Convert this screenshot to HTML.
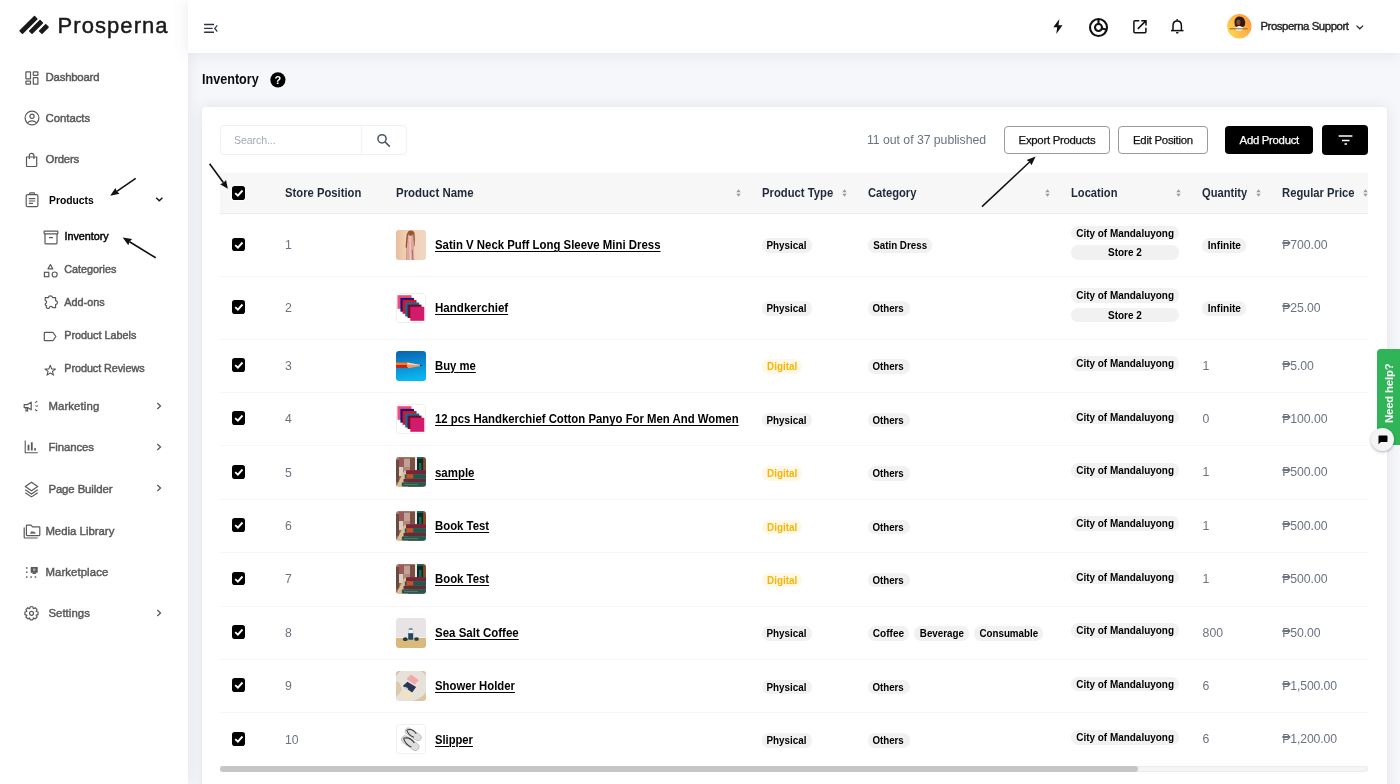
<!DOCTYPE html>
<html lang="en">
<head>
<meta charset="utf-8">
<title>Inventory - Prosperna</title>
<style>
*{box-sizing:border-box;margin:0;padding:0}
html,body{width:1400px;height:784px;overflow:hidden}
body{font-family:"Liberation Sans",sans-serif;background:#f6f7fa;color:#111;position:relative}
#bgband{display:none}
.abs{position:absolute}
.t{position:absolute;height:20px;line-height:20px;white-space:nowrap}
#root{position:absolute;left:0;top:0;width:1400px;height:784px;overflow:hidden;will-change:transform}
#sidebar{position:absolute;left:0;top:0;width:188px;height:784px;background:#fff;box-shadow:0 0 14px rgba(70,80,110,0.110)}
#topbar{position:absolute;left:188px;top:0;width:1212px;height:52.700px;background:#fff;box-shadow:0 0 16px rgba(70,80,110,0.120)}
.nav,.sub{position:absolute;height:20px;line-height:20px;font-weight:bold;color:#5b5b5b;white-space:nowrap}
.nav{font-size:12px}
.sub{font-size:11.5px}
.ic{position:absolute}
#card{position:absolute;left:202px;top:107px;width:1185px;height:700px;background:#fff;border-radius:4px;box-shadow:0 0 14px rgba(70,80,110,0.125)}
#thead{position:absolute;left:220px;top:172.500px;width:1148px;height:41.700px;background:#f7f7f8;border-bottom:1px solid #ececee}
.th{position:absolute;top:183px;height:20px;line-height:20px;font-size:12.4px;font-weight:bold;color:#1f2937;white-space:nowrap}
.sort{position:absolute;top:188px;width:6px;height:10px}
.rl{position:absolute;left:220px;width:1148px;height:1px;background:#f6f6f8}
.cb{position:absolute;left:231.600px;width:13.700px;height:13.900px;background:#000;border-radius:2.800px;box-shadow:0 0 0 0.800px #fff}
.cb svg{position:absolute;left:0;top:0}
.pos{position:absolute;left:285px;font-size:12.5px;color:#6b7280;line-height:16px}
.pn{position:absolute;left:435px;font-size:12.4px;font-weight:bold;color:#000;text-decoration:underline;line-height:16px;white-space:nowrap}
.img{position:absolute;left:396px;width:30px;height:30px;border-radius:3px;overflow:hidden}
.img svg{display:block}
.tag{position:absolute;height:14px;line-height:14px;font-size:10.4px;font-weight:bold;color:#000;background:#f1f1f1;border-radius:7px;white-space:nowrap;text-align:center}
.tag span{display:inline-block;transform-origin:50% 50%}
.dig{color:#f8b400;background:#fff8e6}
.qty{position:absolute;left:1202px;font-size:12.5px;color:#6b7280;line-height:16px}
.price{position:absolute;left:1282px;font-size:12.5px;color:#6b7280;line-height:16px;white-space:nowrap}
.btn{position:absolute;top:125px;height:29px;border-radius:4px;font-size:11.3px;text-align:center;white-space:nowrap}
.btn.o{border:1px solid #9a9a9a;background:#fff;color:#111;line-height:27px}
.btn.b{background:#000;color:#fff;line-height:29px}
</style>
</head>
<body>
<div id="root">
<div id="bgband"></div>
<div id="sidebar">
<svg class="ic" style="left:0;top:0;overflow:visible" width="60" height="50" fill="none" stroke="#1a1a1a" stroke-width="4.300" stroke-linecap="butt" stroke-linejoin="round"><path d="M22.49 33.20 L36.84 18.94 L34.51 16.60 L20.16 30.86 Z" fill="#1a1a1a" stroke-width="1.500"/><path d="M32.04 33.25 L42.39 22.99 L40.06 20.65 L29.71 30.91 Z" fill="#1a1a1a" stroke-width="1.500"/><path d="M41.99 33.24 L48.05 27.14 L45.71 24.81 L39.65 30.91 Z" fill="#1a1a1a" stroke-width="1.500"/></svg>
<div class="t logo" style="left:57.6px;top:16.3px;font-size:22px;letter-spacing:1.055px;color:#1a1a1a;-webkit-text-stroke:0.450px #1a1a1a;">Prosperna</div>
<div class="t " style="left:45.6px;top:67.1px;font-size:11.4px;letter-spacing:-0.230px;color:#595959;-webkit-text-stroke:0.45px #595959;">Dashboard</div>
<div class="t " style="left:45.6px;top:107.6px;font-size:11.4px;letter-spacing:-0.061px;color:#595959;-webkit-text-stroke:0.45px #595959;">Contacts</div>
<div class="t " style="left:45.6px;top:148.8px;font-size:11.4px;letter-spacing:-0.240px;color:#595959;-webkit-text-stroke:0.45px #595959;">Orders</div>
<div class="t " style="left:48.5px;top:190.3px;font-size:11.4px;transform:scaleX(0.9067);transform-origin:0 50%;color:#000;font-weight:bold;">Products</div>
<div class="t " style="left:48.4px;top:396.1px;font-size:11.4px;letter-spacing:0.105px;color:#595959;-webkit-text-stroke:0.45px #595959;">Marketing</div>
<div class="t " style="left:48.4px;top:436.6px;font-size:11.4px;letter-spacing:-0.095px;color:#595959;-webkit-text-stroke:0.45px #595959;">Finances</div>
<div class="t " style="left:48.4px;top:478.6px;font-size:11.4px;letter-spacing:-0.106px;color:#595959;-webkit-text-stroke:0.45px #595959;">Page Builder</div>
<div class="t " style="left:45.4px;top:520.6px;font-size:11.4px;letter-spacing:-0.005px;color:#595959;-webkit-text-stroke:0.45px #595959;">Media Library</div>
<div class="t " style="left:45.4px;top:561.6px;font-size:11.4px;letter-spacing:0.082px;color:#595959;-webkit-text-stroke:0.45px #595959;">Marketplace</div>
<div class="t " style="left:48.4px;top:602.6px;font-size:11.4px;letter-spacing:0.039px;color:#595959;-webkit-text-stroke:0.45px #595959;">Settings</div>
<div class="t " style="left:64.5px;top:225.7px;font-size:10.8px;letter-spacing:-0.025px;color:#000;-webkit-text-stroke:0.45px #000;">Inventory</div>
<div class="t " style="left:64.3px;top:258.7px;font-size:10.8px;letter-spacing:-0.023px;color:#595959;-webkit-text-stroke:0.45px #595959;">Categories</div>
<div class="t " style="left:64.3px;top:291.7px;font-size:10.8px;letter-spacing:0.039px;color:#595959;-webkit-text-stroke:0.45px #595959;">Add-ons</div>
<div class="t " style="left:64.3px;top:324.7px;font-size:10.8px;letter-spacing:-0.003px;color:#595959;-webkit-text-stroke:0.45px #595959;">Product Labels</div>
<div class="t " style="left:64.3px;top:357.7px;font-size:10.8px;letter-spacing:-0.055px;color:#595959;-webkit-text-stroke:0.45px #595959;">Product Reviews</div>
<svg class="ic" style="left:24.5px;top:70.5px;" width="14" height="14" viewBox="0 0 14 14" fill="none" stroke="#595959" stroke-width="1.2"><rect x="0.9" y="0.9" width="4.6" height="6.9" rx="0.4"/><rect x="8.3" y="0.9" width="4.6" height="3.4" rx="0.4"/><rect x="0.9" y="10.2" width="4.6" height="2.9" rx="0.4"/><rect x="8.300" y="6.700" width="4.600" height="6.400" rx="0.4"/></svg>
<svg class="ic" style="left:23.6px;top:110.4px;" width="16" height="16" viewBox="0 0 16 16" fill="none" stroke="#595959" stroke-width="1.2"><circle cx="8" cy="8" r="6.9"/><circle cx="8" cy="6.300" r="2.1"/><path d="M3.2 12.9 Q8 8.700 12.8 12.9"/></svg>
<svg class="ic" style="left:24.8px;top:151.5px;" width="14" height="16" viewBox="0 0 14 16" fill="none" stroke="#595959" stroke-width="1.2"><path d="M1.500 5 H11.700 V13.6 Q11.700 14.500 10.8 14.500 H2.400 Q1.500 14.500 1.500 13.6Z"/><path d="M4.300 7 V3.500 Q4.300 1.300 6.600 1.300 Q8.900 1.300 8.900 3.500 V7"/></svg>
<svg class="ic" style="left:24.6px;top:192px;" width="14" height="16" viewBox="0 0 14 16" fill="none" stroke="#595959" stroke-width="1.2"><rect x="1.200" y="2.600" width="11.700" height="12.100" rx="1.500"/><path d="M4.600 2.600 V1.500 Q4.600 0.900 5.200 0.900 H8.900 Q9.500 0.900 9.500 1.500 V2.600" /><path d="M3.800 6.600 H10.300 M3.800 9 H10.300 M3.800 11.400 H8"/></svg>
<svg class="ic" style="left:42.5px;top:229.5px;" width="16" height="15" viewBox="0 0 16 15" fill="none" stroke="#595959" stroke-width="1.2"><rect x="1.100" y="1.200" width="13.800" height="2.600" rx="0.500"/><path d="M2 3.800 V12.900 Q2 13.900 3 13.900 H13 Q14 13.900 14 12.900 V3.800"/><path d="M6 7.600 H10" stroke-width="1.3"/></svg>
<svg class="ic" style="left:43px;top:262.6px;" width="16" height="15" viewBox="0 0 16 15" fill="none" stroke="#595959" stroke-width="1.2"><path d="M7.400 1.600 L9.800 5.800 H5Z" stroke-linejoin="round"/><rect x="1.400" y="9.300" width="4.400" height="4.400"/><circle cx="11.700" cy="11.500" r="2.500"/></svg>
<svg class="ic" style="left:43px;top:295.2px;" width="16" height="15" viewBox="0 0 16 15" fill="none" stroke="#595959" stroke-width="1.2"><path d="M2.200 2.600 H5.300 Q5.600 0.900 7.400 0.900 Q9.200 0.900 9.500 2.600 H12.600 V5.600 Q14.500 5.900 14.500 7.600 Q14.500 9.300 12.600 9.600 V12.700 H9.700 Q9.300 11.200 7.900 11.300 Q6.600 11.400 6.300 13 Q5.200 14 3.800 13 Q2.800 12.300 3.600 10.800 Q2.200 10.600 2.200 9.500 Q2.300 8.600 3.200 8 Q4 7.400 3.400 6.300 Q2.900 5.600 2.200 5.500Z" stroke-linejoin="round"/></svg>
<svg class="ic" style="left:43.2px;top:330.5px;" width="14" height="11" viewBox="0 0 14 11" fill="none" stroke="#595959" stroke-width="1.2"><path d="M1.300 2.200 Q1.300 1.300 2.200 1.300 H9.300 Q9.900 1.300 10.300 1.800 L12.900 5.500 L10.300 9.200 Q9.900 9.700 9.300 9.700 H2.200 Q1.300 9.700 1.300 8.800Z" stroke-linejoin="round"/></svg>
<svg class="ic" style="left:44.4px;top:363.7px;" width="12.5" height="12.5" viewBox="0 0 12.5 12.5" fill="none" stroke="#595959" stroke-width="1.2"><path d="M6.250 1.300 L7.600 4.900 L11.500 5 L8.450 7.400 L9.500 11.100 L6.250 9 L3 11.100 L4.050 7.400 L1 5 L4.900 4.900Z" stroke-linejoin="round" stroke-width="1.100"/></svg>
<svg class="ic" style="left:23.3px;top:400px;" width="16" height="13" viewBox="0 0 16 13" fill="none" stroke="#595959" stroke-width="1.2"><path d="M1.200 4.600 H4.600 L8.200 2.200 V9.800 L4.600 7.600 H1.200Z" stroke-linejoin="round"/><path d="M3 7.800 V10.800 H4.600 V7.800"/><path d="M10.400 6 H10.500" stroke-width="1.400"/><path d="M12 2.600 L14.300 1.200 M12.500 6 H15 M12 9.500 L14.300 11" stroke-width="1.100"/></svg>
<svg class="ic" style="left:24.2px;top:440px;" width="14.5" height="14" viewBox="0 0 14.5 14" fill="none" stroke="#595959" stroke-width="1.2"><path d="M1.200 0.600 V12.800 H13.800" stroke-width="1.100"/><path d="M4.500 10.600 V4.800 M7.800 10.600 V2.200 M11.100 10.600 V8.200" stroke-width="1.800"/></svg>
<svg class="ic" style="left:23.9px;top:480.8px;" width="15" height="17" viewBox="0 0 15 17" fill="none" stroke="#595959" stroke-width="1.2"><path d="M7.500 1.200 L13.700 5.500 L7.500 9.800 L1.300 5.500Z" stroke-linejoin="round"/><path d="M1.300 8.800 L7.500 13 L13.700 8.800"/><path d="M1.300 11.700 L7.500 15.900 L13.700 11.700"/></svg>
<svg class="ic" style="left:22.6px;top:523.6px;" width="18" height="15.5" viewBox="0 0 18 15.5" fill="none" stroke="#595959" stroke-width="1.2"><path d="M3.400 2 Q3.400 1.200 4.200 1.200 H8 L9.500 2.800 H16 Q16.800 2.800 16.800 3.600 V10.800 Q16.800 11.600 16 11.600 H4.200 Q3.400 11.600 3.400 10.800Z" stroke-linejoin="round"/><path d="M1.200 3.500 V13.200 Q1.200 14 2 14 H14.600"/><path d="M7.300 9.300 L9 7.300 L10.100 8.500 L11 7.700 L12.400 9.300Z" fill="#595959" stroke-width="0.600"/></svg>
<svg class="ic" style="left:25px;top:566px;" width="14" height="13" viewBox="0 0 14 13" fill="none" stroke="#595959" stroke-width="1.2"><rect x="5.700" y="1" width="7" height="5.800" fill="#595959" stroke="none"/><rect x="8" y="2.500" width="2.400" height="2.400" fill="#aaa" stroke="none"/><path d="M7.500 6.800 H11 V8 H7.500Z" fill="#595959" stroke="none"/><g fill="#595959" stroke="none"><rect x="1" y="1.200" width="1.500" height="1.500"/><rect x="1" y="5.400" width="1.500" height="1.500"/><rect x="1" y="10.300" width="1.500" height="1.500"/><rect x="5.300" y="10.300" width="1.500" height="1.500"/><rect x="9.700" y="10.300" width="1.500" height="1.500"/></g></svg>
<svg class="ic" style="left:24px;top:605.8px;" width="15" height="15" viewBox="0 0 15 15" fill="none" stroke="#595959" stroke-width="1.2"><path d="M14.07 5.97 L14.07 8.63 L12.27 9.10 L12.15 9.40 L13.08 11.00 L11.20 12.88 L9.60 11.95 L9.30 12.07 L8.83 13.87 L6.17 13.87 L5.70 12.07 L5.40 11.95 L3.80 12.88 L1.92 11.00 L2.85 9.40 L2.73 9.10 L0.93 8.63 L0.93 5.97 L2.73 5.50 L2.85 5.20 L1.92 3.60 L3.80 1.72 L5.40 2.65 L5.70 2.53 L6.17 0.73 L8.83 0.73 L9.30 2.53 L9.60 2.65 L11.20 1.72 L13.08 3.60 L12.15 5.20 L12.27 5.50 Z" stroke-linejoin="round"/><circle cx="7.500" cy="7.300" r="2"/></svg>
<svg class="ic" style="left:155px;top:196.1px;" width="9" height="7" viewBox="0 0 9 7" fill="none" stroke="#595959" stroke-width="1.2"><path d="M1.200 1.700 L4.300 4.700 L7.400 1.700" stroke="#111" stroke-width="1.400"/></svg>
<svg class="ic" style="left:156px;top:402.4px;" width="6" height="8" viewBox="0 0 6 8" fill="none" stroke="#595959" stroke-width="1.2"><path d="M1.300 1 L4.500 4 L1.300 7" stroke-width="1.300"/></svg>
<svg class="ic" style="left:156px;top:442.9px;" width="6" height="8" viewBox="0 0 6 8" fill="none" stroke="#595959" stroke-width="1.2"><path d="M1.300 1 L4.500 4 L1.300 7" stroke-width="1.300"/></svg>
<svg class="ic" style="left:156px;top:483.9px;" width="6" height="8" viewBox="0 0 6 8" fill="none" stroke="#595959" stroke-width="1.2"><path d="M1.300 1 L4.500 4 L1.300 7" stroke-width="1.300"/></svg>
<svg class="ic" style="left:156px;top:609px;" width="6" height="8" viewBox="0 0 6 8" fill="none" stroke="#595959" stroke-width="1.2"><path d="M1.300 1 L4.500 4 L1.300 7" stroke-width="1.300"/></svg>
<svg class="ic" style="left:0;top:0;overflow:visible" width="1" height="1"><path d="M135.7 178.3 L116.8 191.3" stroke="#111" stroke-width="1.6" fill="none"/><path d="M110.2 195.8 L115.4 187.9 L116.8 191.3 L119.5 193.8 Z" fill="#111"/></svg>
<svg class="ic" style="left:0;top:0;overflow:visible" width="1" height="1"><path d="M155.7 257.8 L129.5 241.8" stroke="#111" stroke-width="1.6" fill="none"/><path d="M122.7 237.6 L132.1 239.1 L129.5 241.8 L128.3 245.3 Z" fill="#111"/></svg>
</div>
<div id="topbar"></div>
<svg class="ic" style="left:203px;top:22px" width="16" height="13" viewBox="0 0 16 13" fill="none" stroke="#2b3445" stroke-width="1.4"><path d="M1.1 2.500 H11 M1.100 6.400 H9.600 M1.100 10.300 H11"/><path d="M14.300 3.300 L11.700 6.400 L14.300 9.500" stroke-width="1.200"/></svg>
<svg class="ic" style="left:1052px;top:18px" width="12" height="17" viewBox="0 0 12 17" fill="#111"><path d="M7.400 0.900 L1.300 9.300 H5.200 L4.300 16 L10.500 7.300 H6.500Z"/></svg>
<svg class="ic" style="left:1088px;top:16.700px" width="21" height="21" viewBox="0 0 21 21" fill="none" stroke="#111" stroke-width="2.100"><circle cx="10.500" cy="10.500" r="8.500"/><circle cx="10.500" cy="10.500" r="3.500"/><path d="M10.500 7 V1.900 M13.800 11.600 L18.900 12.800"/></svg>
<svg class="ic" style="left:1132px;top:18.500px" width="16" height="16" viewBox="0 0 16 16" fill="none" stroke="#111" stroke-width="1.500"><path d="M7.300 1.800 H2.900 Q1.900 1.800 1.900 2.800 V12.800 Q1.900 13.800 2.900 13.800 H12.900 Q13.900 13.800 13.900 12.800 V8.700"/><path d="M5.800 9.900 L13.600 2.100 M9.300 1.700 H14 V6.400" /></svg>
<svg class="ic" style="left:1170px;top:18px" width="14.500" height="17" viewBox="0 0 14.500 17" fill="none" stroke="#111" stroke-width="1.500"><path d="M3 12.400 V7.600 Q3 3 7.200 3 Q11.400 3 11.400 7.600 V12.400"/><path d="M1 12.600 H13.500"/><circle cx="7.200" cy="1.900" r="0.900" fill="#111" stroke="none"/><path d="M6 14.600 Q7.200 16 8.400 14.600Z" fill="#111" stroke-width="0.800"/></svg>
<svg class="ic" style="left:1227px;top:14px" width="25" height="25" viewBox="0 0 25 25">
<defs><linearGradient id="av" x1="0" y1="0.800" x2="1" y2="0.200"><stop offset="0" stop-color="#ffd652"/><stop offset="0.500" stop-color="#ffb848"/><stop offset="1" stop-color="#ff9440"/></linearGradient><clipPath id="avc"><circle cx="12.300" cy="12.300" r="12.200"/></clipPath></defs>
<circle cx="12.300" cy="12.300" r="12.200" fill="url(#av)"/>
<g clip-path="url(#avc)"><path d="M7.600 9.500 Q6.800 5 10.500 2.800 Q14.500 1.600 17 4.500 Q19 7.500 17.800 11.500 Q16.500 13.500 14 13 H9.500 Q7.300 12.200 7.600 9.500Z" fill="#2e1a12"/><ellipse cx="11.400" cy="8.200" rx="2.100" ry="2.800" fill="#8a4a2a"/><path d="M8 14.800 Q10 11.600 13 11.900 Q16 12.200 16.800 14.800 L14 16.800 H9.500Z" fill="#f6efe2"/><rect x="2.600" y="14.300" width="18" height="1" fill="#6a4a20" opacity="0.750"/></g></svg>
<div class="t " style="left:1260.4px;top:16.3px;font-size:11.4px;letter-spacing:-0.441px;color:#1f1f1f;-webkit-text-stroke:0.4px #1f1f1f;">Prosperna Support</div>
<svg class="ic" style="left:1354.500px;top:23.500px" width="10" height="7" viewBox="0 0 10 7" fill="none" stroke="#222" stroke-width="1.200"><path d="M1.500 1.600 L4.800 4.800 L8.100 1.600"/></svg>
<div class="t " style="left:202.3px;top:69.4px;font-size:14px;transform:scaleX(0.8998);transform-origin:0 50%;color:#0b0b0b;font-weight:bold;">Inventory</div>
<svg class="ic" style="left:269.500px;top:71.800px" width="16" height="16" viewBox="0 0 16 16"><circle cx="7.900" cy="7.800" r="7.600" fill="#000"/><text x="7.900" y="11.700" text-anchor="middle" font-family="Liberation Sans, sans-serif" font-weight="bold" font-size="11" fill="#fff">?</text></svg>
<div id="card"></div>
<div class="abs" style="left:220px;top:125px;width:187px;height:29.500px;border:1px solid #eef0f3;border-radius:4px;background:#fff"></div><div class="abs" style="left:361px;top:125px;width:1px;height:29.500px;background:#eef0f3"></div>
<div class="t " style="left:234px;top:129.8px;font-size:10.6px;letter-spacing:-0.102px;color:#a3aab5;">Search...</div>
<svg class="ic" style="left:375.500px;top:132.500px" width="16" height="16" viewBox="0 0 16 16" fill="none" stroke="#4b5563" stroke-width="1.500"><circle cx="6" cy="5.800" r="4.100"/><path d="M9 8.900 L13.800 13.600"/></svg>
<div class="t " style="left:867px;top:130px;font-size:12.25px;letter-spacing:-0.029px;color:#6b7280;">11 out of 37 published</div>
<div class="btn o" style="left:1004px;width:106px;top:125.500px;height:28.700px"></div><div class="btn o" style="left:1118.400px;width:89.200px;top:125.500px;height:28.700px"></div>
<div class="btn b" style="left:1225.300px;width:88.200px;top:125.800px;height:28px"></div><div class="btn b" style="left:1322px;width:46.300px;top:124.900px;height:29.800px"></div>
<div class="t " style="left:1018.6px;top:129.9px;font-size:11.4px;letter-spacing:-0.287px;color:#111;-webkit-text-stroke:0.250px #111;">Export Products</div>
<div class="t " style="left:1133px;top:129.9px;font-size:11.4px;letter-spacing:-0.259px;color:#111;-webkit-text-stroke:0.250px #111;">Edit Position</div>
<div class="t " style="left:1239.6px;top:129.9px;font-size:11.4px;letter-spacing:-0.304px;color:#fff;-webkit-text-stroke:0.250px #fff;">Add Product</div>
<svg class="ic" style="left:1337px;top:133px" width="17" height="14" viewBox="0 0 17 14" fill="none" stroke="#fff" stroke-width="1.500"><path d="M1.600 3 H15.400 M5 7.400 H12.500 M7.500 11 H10"/></svg>
<div id="thead"></div>
<div class="cb" style="top:186.3px"><svg width="14" height="14" viewBox="0 0 14 14" fill="none" stroke="#fff" stroke-width="1.900"><path d="M3.200 7.100 L5.900 9.600 L10.500 4.500"/></svg></div>
<div class="t " style="left:285px;top:183px;font-size:12.25px;transform:scaleX(0.9189);transform-origin:0 50%;color:#1f2937;font-weight:bold;">Store Position</div>
<div class="t " style="left:395.6px;top:183px;font-size:12.25px;transform:scaleX(0.9344);transform-origin:0 50%;color:#1f2937;font-weight:bold;">Product Name</div>
<div class="t " style="left:761.6px;top:183px;font-size:12.25px;transform:scaleX(0.9203);transform-origin:0 50%;color:#1f2937;font-weight:bold;">Product Type</div>
<div class="t " style="left:867.6px;top:183px;font-size:12.25px;transform:scaleX(0.9115);transform-origin:0 50%;color:#1f2937;font-weight:bold;">Category</div>
<div class="t " style="left:1071px;top:183px;font-size:12.25px;transform:scaleX(0.9111);transform-origin:0 50%;color:#1f2937;font-weight:bold;">Location</div>
<div class="t " style="left:1202.4px;top:183px;font-size:12.25px;transform:scaleX(0.9098);transform-origin:0 50%;color:#1f2937;font-weight:bold;">Quantity</div>
<div class="t " style="left:1282.4px;top:183px;font-size:12.25px;transform:scaleX(0.9192);transform-origin:0 50%;color:#1f2937;font-weight:bold;">Regular Price</div>
<svg class="ic" style="left:735.7px;top:189.300px" width="5" height="8" viewBox="0 0 5 8" fill="#9b9b9b"><path d="M2.500 0.300 L4.700 3.200 H0.300Z M2.500 7.700 L4.700 4.800 H0.300Z"/></svg>
<svg class="ic" style="left:842px;top:189.300px" width="5" height="8" viewBox="0 0 5 8" fill="#9b9b9b"><path d="M2.500 0.300 L4.700 3.200 H0.300Z M2.500 7.700 L4.700 4.800 H0.300Z"/></svg>
<svg class="ic" style="left:1045px;top:189.300px" width="5" height="8" viewBox="0 0 5 8" fill="#9b9b9b"><path d="M2.500 0.300 L4.700 3.200 H0.300Z M2.500 7.700 L4.700 4.800 H0.300Z"/></svg>
<svg class="ic" style="left:1176.3px;top:189.300px" width="5" height="8" viewBox="0 0 5 8" fill="#9b9b9b"><path d="M2.500 0.300 L4.700 3.200 H0.300Z M2.500 7.700 L4.700 4.800 H0.300Z"/></svg>
<svg class="ic" style="left:1256px;top:189.300px" width="5" height="8" viewBox="0 0 5 8" fill="#9b9b9b"><path d="M2.500 0.300 L4.700 3.200 H0.300Z M2.500 7.700 L4.700 4.800 H0.300Z"/></svg>
<svg class="ic" style="left:1363px;top:189.300px" width="5" height="8" viewBox="0 0 5 8" fill="#9b9b9b"><path d="M2.500 0.300 L4.700 3.200 H0.300Z M2.500 7.700 L4.700 4.800 H0.300Z"/></svg>
<div class="rl" style="top:276.2px"></div>
<div class="cb" style="top:237.6px"><svg width="14" height="14" viewBox="0 0 14 14" fill="none" stroke="#fff" stroke-width="1.900"><path d="M3.200 7.100 L5.900 9.600 L10.500 4.500"/></svg></div>
<div class="t " style="left:285px;top:234.9px;font-size:12.25px;color:#6b7280;">1</div>
<div class="img" style="top:230.25px"><svg width="30" height="30" viewBox="0 0 30 30"><filter id="bl0_3" x="-5%" y="-5%" width="110%" height="110%"><feGaussianBlur stdDeviation="0.3"/></filter><g filter="url(#bl0_3)"><defs><linearGradient id="dr" x1="0" x2="1" y1="0" y2="0"><stop offset="0" stop-color="#e6b691"/><stop offset="0.300" stop-color="#efcdb0"/><stop offset="1" stop-color="#f0d8c4"/></linearGradient></defs><rect x="-3" y="-3" width="36" height="36" fill="url(#dr)"/><path d="M12.400 1.200 Q13.500 0.400 15 0.600 Q17.500 0.600 18.400 2.500 L18.900 9 L18.500 16 L17.800 16.500 L18 30 H10.500 L10.700 18 L9.600 17.200 L10.200 9 L10.800 4Z" fill="#9a5530"/><path d="M12.200 3.800 L13 5.500 L16.500 5.500 L17.200 3.600 L17.800 13 L18.300 30 H10.500 L11 16Z" fill="#dea8a0"/><path d="M13.300 6 L13.800 30 H15 L14.600 6Z" fill="#efcdc6"/><path d="M15.800 20 L16.300 30 H17.300 L16.800 19Z" fill="#b07068"/></g></svg></div>
<div class="t " style="left:434.9px;top:234.9px;font-size:12.25px;transform:scaleX(0.9305);transform-origin:0 50%;color:#000;font-weight:bold;text-decoration:underline;text-decoration-thickness:1px;text-underline-offset:1.500px;">Satin V Neck Puff Long Sleeve Mini Dress</div>
<div class="tag " style="left:761.7px;top:238.4px;width:50.4px;height:14.6px;line-height:14.6px;font-size:10.6px"><span style="transform:scaleX(0.9299)">Physical</span></div>
<div class="tag " style="left:867.5px;top:238.4px;width:64.6px;height:14.6px;line-height:14.6px;font-size:10.6px"><span style="transform:scaleX(0.9258)">Satin Dress</span></div>
<div class="tag " style="left:1071px;top:225.7px;width:108.3px;height:14.6px;line-height:14.6px;font-size:10.6px"><span style="transform:scaleX(0.9383)">City of Mandaluyong</span></div>
<div class="tag " style="left:1071px;top:245.1px;width:108.3px;height:14.6px;line-height:14.6px;font-size:10.6px"><span style="transform:scaleX(0.9406)">Store 2</span></div>
<div class="tag " style="left:1202.2px;top:238.4px;width:43.4px;height:14.6px;line-height:14.6px;font-size:10.6px"><span style="transform:scaleX(0.9557)">Infinite</span></div>
<div class="t " style="left:1282.2px;top:234.7px;font-size:12.25px;letter-spacing:-0.063px;color:#6b7280;">₱700.00</div>
<div class="rl" style="top:338.5px"></div>
<div class="cb" style="top:300.15px"><svg width="14" height="14" viewBox="0 0 14 14" fill="none" stroke="#fff" stroke-width="1.900"><path d="M3.200 7.100 L5.900 9.600 L10.500 4.500"/></svg></div>
<div class="t " style="left:285px;top:297.95px;font-size:12.25px;color:#6b7280;">2</div>
<div class="img" style="top:292.8px"><svg width="30" height="30" viewBox="0 0 30 30"><rect x="0.500" y="0.500" width="29" height="29" rx="2.500" fill="#fff" stroke="#edf0f3"/><rect x="1.500" y="2.200" width="14" height="13.600" fill="#f0497a"/><rect x="4.400" y="4.900" width="13.600" height="13.800" fill="#15197c"/><rect x="6.600" y="7" width="13.900" height="13.800" fill="#df131d"/><rect x="9.200" y="9.500" width="14" height="14" fill="#0b6fa8"/><rect x="11.600" y="11.600" width="13.900" height="13.400" fill="#780a25"/><rect x="14.300" y="13.800" width="14" height="14" fill="#d31b6b"/></svg></div>
<div class="t " style="left:434.9px;top:297.95px;font-size:12.25px;transform:scaleX(0.9432);transform-origin:0 50%;color:#000;font-weight:bold;text-decoration:underline;text-decoration-thickness:1px;text-underline-offset:1.500px;">Handkerchief</div>
<div class="tag " style="left:761.7px;top:300.95px;width:50.4px;height:14.6px;line-height:14.6px;font-size:10.6px"><span style="transform:scaleX(0.9299)">Physical</span></div>
<div class="tag " style="left:867.5px;top:300.95px;width:42px;height:14.6px;line-height:14.6px;font-size:10.6px"><span style="transform:scaleX(0.9191)">Others</span></div>
<div class="tag " style="left:1071px;top:288.25px;width:108.3px;height:14.6px;line-height:14.6px;font-size:10.6px"><span style="transform:scaleX(0.9383)">City of Mandaluyong</span></div>
<div class="tag " style="left:1071px;top:307.65px;width:108.3px;height:14.6px;line-height:14.6px;font-size:10.6px"><span style="transform:scaleX(0.9406)">Store 2</span></div>
<div class="tag " style="left:1202.2px;top:300.95px;width:43.4px;height:14.6px;line-height:14.6px;font-size:10.6px"><span style="transform:scaleX(0.9557)">Infinite</span></div>
<div class="t " style="left:1282.2px;top:297.75px;font-size:12.25px;letter-spacing:-0.071px;color:#6b7280;">₱25.00</div>
<div class="rl" style="top:391.9px"></div>
<div class="cb" style="top:358px"><svg width="14" height="14" viewBox="0 0 14 14" fill="none" stroke="#fff" stroke-width="1.900"><path d="M3.200 7.100 L5.900 9.600 L10.500 4.500"/></svg></div>
<div class="t " style="left:285px;top:355.8px;font-size:12.25px;color:#6b7280;">3</div>
<div class="img" style="top:350.65px"><svg width="30" height="30" viewBox="0 0 30 30"><defs><linearGradient id="pb" x1="0" x2="0.150" y1="0" y2="1"><stop offset="0" stop-color="#0963ad"/><stop offset="0.450" stop-color="#0a86cf"/><stop offset="1" stop-color="#0ab6ee"/></linearGradient></defs><rect width="30" height="30" fill="url(#pb)"/><rect x="0" y="11.600" width="11.800" height="2.500" fill="#ff7d12"/><rect x="0" y="14.100" width="11.800" height="2.700" fill="#d61a0a"/><path d="M11.400 11.600 L24.500 13.900 L24.500 14.900 L12.400 17.200 L11 15.200Z" fill="#f09a68"/><path d="M11.400 11.600 L24.500 13.900 L24.500 14.300 L11.200 13.500Z" fill="#ffd7b5"/><path d="M24 13.700 L26.800 14.400 L24 15.100Z" fill="#272a3a"/></svg></div>
<div class="t " style="left:434.9px;top:355.8px;font-size:12.25px;transform:scaleX(0.9220);transform-origin:0 50%;color:#000;font-weight:bold;text-decoration:underline;text-decoration-thickness:1px;text-underline-offset:1.500px;">Buy me</div>
<div class="tag dig" style="left:761.9px;top:359.3px;width:40.2px;height:14.6px;line-height:14.6px;font-size:10.6px"><span style="transform:scaleX(0.9324)">Digital</span></div>
<div class="tag " style="left:867.5px;top:359.3px;width:42px;height:14.6px;line-height:14.6px;font-size:10.6px"><span style="transform:scaleX(0.9191)">Others</span></div>
<div class="tag " style="left:1071px;top:356.2px;width:108.3px;height:14.6px;line-height:14.6px;font-size:10.6px"><span style="transform:scaleX(0.9383)">City of Mandaluyong</span></div>
<div class="t " style="left:1202.6px;top:355.5px;font-size:12.25px;color:#6b7280;">1</div>
<div class="t " style="left:1282.2px;top:355.6px;font-size:12.25px;letter-spacing:-0.103px;color:#6b7280;">₱5.00</div>
<div class="rl" style="top:445.3px"></div>
<div class="cb" style="top:411.4px"><svg width="14" height="14" viewBox="0 0 14 14" fill="none" stroke="#fff" stroke-width="1.900"><path d="M3.200 7.100 L5.900 9.600 L10.500 4.500"/></svg></div>
<div class="t " style="left:285px;top:409.2px;font-size:12.25px;color:#6b7280;">4</div>
<div class="img" style="top:404.05px"><svg width="30" height="30" viewBox="0 0 30 30"><rect x="0.500" y="0.500" width="29" height="29" rx="2.500" fill="#fff" stroke="#edf0f3"/><rect x="1.500" y="2.200" width="14" height="13.600" fill="#f0497a"/><rect x="4.400" y="4.900" width="13.600" height="13.800" fill="#15197c"/><rect x="6.600" y="7" width="13.900" height="13.800" fill="#df131d"/><rect x="9.200" y="9.500" width="14" height="14" fill="#0b6fa8"/><rect x="11.600" y="11.600" width="13.900" height="13.400" fill="#780a25"/><rect x="14.300" y="13.800" width="14" height="14" fill="#d31b6b"/></svg></div>
<div class="t " style="left:434.9px;top:409.2px;font-size:12.25px;transform:scaleX(0.9273);transform-origin:0 50%;color:#000;font-weight:bold;text-decoration:underline;text-decoration-thickness:1px;text-underline-offset:1.500px;">12 pcs Handkerchief Cotton Panyo For Men And Women</div>
<div class="tag " style="left:761.7px;top:412.7px;width:50.4px;height:14.6px;line-height:14.6px;font-size:10.6px"><span style="transform:scaleX(0.9299)">Physical</span></div>
<div class="tag " style="left:867.5px;top:412.7px;width:42px;height:14.6px;line-height:14.6px;font-size:10.6px"><span style="transform:scaleX(0.9191)">Others</span></div>
<div class="tag " style="left:1071px;top:409.6px;width:108.3px;height:14.6px;line-height:14.6px;font-size:10.6px"><span style="transform:scaleX(0.9383)">City of Mandaluyong</span></div>
<div class="t " style="left:1202.6px;top:408.9px;font-size:12.25px;color:#6b7280;">0</div>
<div class="t " style="left:1282.2px;top:409px;font-size:12.25px;letter-spacing:-0.063px;color:#6b7280;">₱100.00</div>
<div class="rl" style="top:498.7px"></div>
<div class="cb" style="top:464.8px"><svg width="14" height="14" viewBox="0 0 14 14" fill="none" stroke="#fff" stroke-width="1.900"><path d="M3.200 7.100 L5.900 9.600 L10.500 4.500"/></svg></div>
<div class="t " style="left:285px;top:462.6px;font-size:12.25px;color:#6b7280;">5</div>
<div class="img" style="top:457.45px"><svg width="30" height="30" viewBox="0 0 30 30"><filter id="bl0_45" x="-5%" y="-5%" width="110%" height="110%"><feGaussianBlur stdDeviation="0.45"/></filter><g filter="url(#bl0_45)"><rect x="-3" y="-3" width="36" height="36" fill="#8c6a58"/><rect x="0" y="0" width="19" height="3" fill="#a07868"/><rect x="0" y="3" width="3" height="22" fill="#6a4a40"/><rect x="3" y="1" width="5" height="9" fill="#9a5a58"/><rect x="8" y="2" width="6" height="8" fill="#c0a098"/><rect x="14" y="1" width="5" height="12" fill="#7a5040"/><rect x="3" y="10" width="4" height="9" fill="#d8d0c8"/><rect x="7" y="10" width="7" height="4" fill="#b08878"/><path d="M0 30 L8 14 L11 14 L7 30Z" fill="#dcbc94"/><path d="M7 30 L11 14 L14 14 L12 30Z" fill="#c8b8b0"/><rect x="19" y="0" width="2" height="13" fill="#e8e8ea"/><rect x="21" y="0" width="6.500" height="13.500" fill="#0d2a26"/><rect x="23" y="6" width="2.500" height="7" fill="#17685a"/><rect x="21" y="0" width="6.500" height="1.800" fill="#1a6a5c"/><rect x="27.500" y="0" width="2.500" height="13.500" fill="#8a4a20"/><rect x="10" y="13.300" width="20" height="3.900" rx="1" fill="#7a2038"/><rect x="8.800" y="17.200" width="21.200" height="4.500" rx="1" fill="#1f5a50"/><rect x="10.500" y="17.200" width="6.700" height="4.500" fill="#c0552a"/><rect x="7.500" y="21.700" width="22.500" height="3.500" rx="1" fill="#6a2a34"/><rect x="5.800" y="25.200" width="24.200" height="4.300" rx="1.300" fill="#1f5c52"/><rect x="8" y="27" width="14" height="0.600" fill="#8a8a50"/></g></svg></div>
<div class="t " style="left:434.9px;top:462.6px;font-size:12.25px;transform:scaleX(0.9356);transform-origin:0 50%;color:#000;font-weight:bold;text-decoration:underline;text-decoration-thickness:1px;text-underline-offset:1.500px;">sample</div>
<div class="tag dig" style="left:761.9px;top:466.1px;width:40.2px;height:14.6px;line-height:14.6px;font-size:10.6px"><span style="transform:scaleX(0.9324)">Digital</span></div>
<div class="tag " style="left:867.5px;top:466.1px;width:42px;height:14.6px;line-height:14.6px;font-size:10.6px"><span style="transform:scaleX(0.9191)">Others</span></div>
<div class="tag " style="left:1071px;top:463px;width:108.3px;height:14.6px;line-height:14.6px;font-size:10.6px"><span style="transform:scaleX(0.9383)">City of Mandaluyong</span></div>
<div class="t " style="left:1202.6px;top:462.3px;font-size:12.25px;color:#6b7280;">1</div>
<div class="t " style="left:1282.2px;top:462.4px;font-size:12.25px;letter-spacing:-0.063px;color:#6b7280;">₱500.00</div>
<div class="rl" style="top:552.1px"></div>
<div class="cb" style="top:518.2px"><svg width="14" height="14" viewBox="0 0 14 14" fill="none" stroke="#fff" stroke-width="1.900"><path d="M3.200 7.100 L5.900 9.600 L10.500 4.500"/></svg></div>
<div class="t " style="left:285px;top:516px;font-size:12.25px;color:#6b7280;">6</div>
<div class="img" style="top:510.85px"><svg width="30" height="30" viewBox="0 0 30 30"><filter id="bl0_45" x="-5%" y="-5%" width="110%" height="110%"><feGaussianBlur stdDeviation="0.45"/></filter><g filter="url(#bl0_45)"><rect x="-3" y="-3" width="36" height="36" fill="#8c6a58"/><rect x="0" y="0" width="19" height="3" fill="#a07868"/><rect x="0" y="3" width="3" height="22" fill="#6a4a40"/><rect x="3" y="1" width="5" height="9" fill="#9a5a58"/><rect x="8" y="2" width="6" height="8" fill="#c0a098"/><rect x="14" y="1" width="5" height="12" fill="#7a5040"/><rect x="3" y="10" width="4" height="9" fill="#d8d0c8"/><rect x="7" y="10" width="7" height="4" fill="#b08878"/><path d="M0 30 L8 14 L11 14 L7 30Z" fill="#dcbc94"/><path d="M7 30 L11 14 L14 14 L12 30Z" fill="#c8b8b0"/><rect x="19" y="0" width="2" height="13" fill="#e8e8ea"/><rect x="21" y="0" width="6.500" height="13.500" fill="#0d2a26"/><rect x="23" y="6" width="2.500" height="7" fill="#17685a"/><rect x="21" y="0" width="6.500" height="1.800" fill="#1a6a5c"/><rect x="27.500" y="0" width="2.500" height="13.500" fill="#8a4a20"/><rect x="10" y="13.300" width="20" height="3.900" rx="1" fill="#7a2038"/><rect x="8.800" y="17.200" width="21.200" height="4.500" rx="1" fill="#1f5a50"/><rect x="10.500" y="17.200" width="6.700" height="4.500" fill="#c0552a"/><rect x="7.500" y="21.700" width="22.500" height="3.500" rx="1" fill="#6a2a34"/><rect x="5.800" y="25.200" width="24.200" height="4.300" rx="1.300" fill="#1f5c52"/><rect x="8" y="27" width="14" height="0.600" fill="#8a8a50"/></g></svg></div>
<div class="t " style="left:434.9px;top:516px;font-size:12.25px;transform:scaleX(0.9278);transform-origin:0 50%;color:#000;font-weight:bold;text-decoration:underline;text-decoration-thickness:1px;text-underline-offset:1.500px;">Book Test</div>
<div class="tag dig" style="left:761.9px;top:519.5px;width:40.2px;height:14.6px;line-height:14.6px;font-size:10.6px"><span style="transform:scaleX(0.9324)">Digital</span></div>
<div class="tag " style="left:867.5px;top:519.5px;width:42px;height:14.6px;line-height:14.6px;font-size:10.6px"><span style="transform:scaleX(0.9191)">Others</span></div>
<div class="tag " style="left:1071px;top:516.4px;width:108.3px;height:14.6px;line-height:14.6px;font-size:10.6px"><span style="transform:scaleX(0.9383)">City of Mandaluyong</span></div>
<div class="t " style="left:1202.6px;top:515.7px;font-size:12.25px;color:#6b7280;">1</div>
<div class="t " style="left:1282.2px;top:515.8px;font-size:12.25px;letter-spacing:-0.063px;color:#6b7280;">₱500.00</div>
<div class="rl" style="top:605.5px"></div>
<div class="cb" style="top:571.6px"><svg width="14" height="14" viewBox="0 0 14 14" fill="none" stroke="#fff" stroke-width="1.900"><path d="M3.200 7.100 L5.900 9.600 L10.500 4.500"/></svg></div>
<div class="t " style="left:285px;top:569.4px;font-size:12.25px;color:#6b7280;">7</div>
<div class="img" style="top:564.25px"><svg width="30" height="30" viewBox="0 0 30 30"><filter id="bl0_45" x="-5%" y="-5%" width="110%" height="110%"><feGaussianBlur stdDeviation="0.45"/></filter><g filter="url(#bl0_45)"><rect x="-3" y="-3" width="36" height="36" fill="#8c6a58"/><rect x="0" y="0" width="19" height="3" fill="#a07868"/><rect x="0" y="3" width="3" height="22" fill="#6a4a40"/><rect x="3" y="1" width="5" height="9" fill="#9a5a58"/><rect x="8" y="2" width="6" height="8" fill="#c0a098"/><rect x="14" y="1" width="5" height="12" fill="#7a5040"/><rect x="3" y="10" width="4" height="9" fill="#d8d0c8"/><rect x="7" y="10" width="7" height="4" fill="#b08878"/><path d="M0 30 L8 14 L11 14 L7 30Z" fill="#dcbc94"/><path d="M7 30 L11 14 L14 14 L12 30Z" fill="#c8b8b0"/><rect x="19" y="0" width="2" height="13" fill="#e8e8ea"/><rect x="21" y="0" width="6.500" height="13.500" fill="#0d2a26"/><rect x="23" y="6" width="2.500" height="7" fill="#17685a"/><rect x="21" y="0" width="6.500" height="1.800" fill="#1a6a5c"/><rect x="27.500" y="0" width="2.500" height="13.500" fill="#8a4a20"/><rect x="10" y="13.300" width="20" height="3.900" rx="1" fill="#7a2038"/><rect x="8.800" y="17.200" width="21.200" height="4.500" rx="1" fill="#1f5a50"/><rect x="10.500" y="17.200" width="6.700" height="4.500" fill="#c0552a"/><rect x="7.500" y="21.700" width="22.500" height="3.500" rx="1" fill="#6a2a34"/><rect x="5.800" y="25.200" width="24.200" height="4.300" rx="1.300" fill="#1f5c52"/><rect x="8" y="27" width="14" height="0.600" fill="#8a8a50"/></g></svg></div>
<div class="t " style="left:434.9px;top:569.4px;font-size:12.25px;transform:scaleX(0.9278);transform-origin:0 50%;color:#000;font-weight:bold;text-decoration:underline;text-decoration-thickness:1px;text-underline-offset:1.500px;">Book Test</div>
<div class="tag dig" style="left:761.9px;top:572.9px;width:40.2px;height:14.6px;line-height:14.6px;font-size:10.6px"><span style="transform:scaleX(0.9324)">Digital</span></div>
<div class="tag " style="left:867.5px;top:572.9px;width:42px;height:14.6px;line-height:14.6px;font-size:10.6px"><span style="transform:scaleX(0.9191)">Others</span></div>
<div class="tag " style="left:1071px;top:569.8px;width:108.3px;height:14.6px;line-height:14.6px;font-size:10.6px"><span style="transform:scaleX(0.9383)">City of Mandaluyong</span></div>
<div class="t " style="left:1202.6px;top:569.1px;font-size:12.25px;color:#6b7280;">1</div>
<div class="t " style="left:1282.2px;top:569.2px;font-size:12.25px;letter-spacing:-0.063px;color:#6b7280;">₱500.00</div>
<div class="rl" style="top:658.9px"></div>
<div class="cb" style="top:625px"><svg width="14" height="14" viewBox="0 0 14 14" fill="none" stroke="#fff" stroke-width="1.900"><path d="M3.200 7.100 L5.900 9.600 L10.500 4.500"/></svg></div>
<div class="t " style="left:285px;top:622.8px;font-size:12.25px;color:#6b7280;">8</div>
<div class="img" style="top:617.65px"><svg width="30" height="30" viewBox="0 0 30 30"><filter id="bl0_35" x="-5%" y="-5%" width="110%" height="110%"><feGaussianBlur stdDeviation="0.35"/></filter><g filter="url(#bl0_35)"><rect x="-3" y="-3" width="36" height="36" fill="#e8e4e6"/><rect x="-3" y="19.200" width="36" height="0.800" fill="#f4f2f2"/><rect x="-3" y="20" width="36" height="13" fill="#d9ba7c"/><rect x="12.200" y="12" width="5" height="9.700" rx="0.800" fill="#1f4a62"/><rect x="12.200" y="12" width="5" height="3.200" fill="#f2f0ee"/><path d="M12.500 12 Q12.500 9.700 14.700 9.700 Q17 9.700 17 12Z" fill="#7a9aa0"/><path d="M6.800 21.500 Q7 19.200 9.300 19.200 Q11.600 19.200 11.800 21.500 Q11.500 23 9.300 23 Q7 23 6.800 21.500Z" fill="#26373d"/><path d="M18.300 19.800 Q20.500 18.800 22.700 19.800 L22.500 22.300 Q20.500 23.300 18.500 22.300Z" fill="#2c3c42"/></g></svg></div>
<div class="t " style="left:434.9px;top:622.8px;font-size:12.25px;transform:scaleX(0.9385);transform-origin:0 50%;color:#000;font-weight:bold;text-decoration:underline;text-decoration-thickness:1px;text-underline-offset:1.500px;">Sea Salt Coffee</div>
<div class="tag " style="left:761.7px;top:626.3px;width:50.4px;height:14.6px;line-height:14.6px;font-size:10.6px"><span style="transform:scaleX(0.9299)">Physical</span></div>
<div class="tag " style="left:867.5px;top:626.3px;width:41.9px;height:14.6px;line-height:14.6px;font-size:10.6px"><span style="transform:scaleX(0.9491)">Coffee</span></div>
<div class="tag " style="left:914.3px;top:626.3px;width:54.7px;height:14.6px;line-height:14.6px;font-size:10.6px"><span style="transform:scaleX(0.9239)">Beverage</span></div>
<div class="tag " style="left:973.9px;top:626.3px;width:69.3px;height:14.6px;line-height:14.6px;font-size:10.6px"><span style="transform:scaleX(0.9228)">Consumable</span></div>
<div class="tag " style="left:1071px;top:623.2px;width:108.3px;height:14.6px;line-height:14.6px;font-size:10.6px"><span style="transform:scaleX(0.9383)">City of Mandaluyong</span></div>
<div class="t " style="left:1202.6px;top:622.5px;font-size:12.25px;color:#6b7280;">800</div>
<div class="t " style="left:1282.2px;top:622.6px;font-size:12.25px;letter-spacing:-0.071px;color:#6b7280;">₱50.00</div>
<div class="rl" style="top:712.3px"></div>
<div class="cb" style="top:678.4px"><svg width="14" height="14" viewBox="0 0 14 14" fill="none" stroke="#fff" stroke-width="1.900"><path d="M3.200 7.100 L5.900 9.600 L10.500 4.500"/></svg></div>
<div class="t " style="left:285px;top:676.2px;font-size:12.25px;color:#6b7280;">9</div>
<div class="img" style="top:671.05px"><svg width="30" height="30" viewBox="0 0 30 30"><filter id="bl0_4" x="-5%" y="-5%" width="110%" height="110%"><feGaussianBlur stdDeviation="0.4"/></filter><g filter="url(#bl0_4)"><rect x="-3" y="-3" width="36" height="36" fill="#e6e2da"/><path d="M0 0 H5 Q1 2 0 6Z" fill="#d8bc98"/><path d="M30 0 V5 Q28 1 24 0Z" fill="#dcc4a0"/><path d="M30 30 H17 Q26 27 30 21Z" fill="#dcc4a4"/><path d="M0 10 Q5 12 6 18 Q3 24 0 26Z" fill="#dccaae"/><path d="M10.400 7.900 L15 3.500 L23 9.300 L18.700 13.700Z" fill="#f2a9a9"/><path d="M18.700 13.700 L23 9.300 L24.500 11.500 L21 16Z" fill="#f8dcd8"/><path d="M6.800 15.100 L11.400 10.800 L20.100 16.100 L16.200 21.400Z" fill="#2b3652"/><rect x="8.500" y="16.300" width="3.600" height="1.700" fill="#c8ccd8" transform="rotate(28 10 17)"/><path d="M3.900 25.300 L7.500 19 L17.700 22.900 L15.300 28.700Z" fill="#f0e2c2"/></g></svg></div>
<div class="t " style="left:434.9px;top:676.2px;font-size:12.25px;transform:scaleX(0.9243);transform-origin:0 50%;color:#000;font-weight:bold;text-decoration:underline;text-decoration-thickness:1px;text-underline-offset:1.500px;">Shower Holder</div>
<div class="tag " style="left:761.7px;top:679.7px;width:50.4px;height:14.6px;line-height:14.6px;font-size:10.6px"><span style="transform:scaleX(0.9299)">Physical</span></div>
<div class="tag " style="left:867.5px;top:679.7px;width:42px;height:14.6px;line-height:14.6px;font-size:10.6px"><span style="transform:scaleX(0.9191)">Others</span></div>
<div class="tag " style="left:1071px;top:676.6px;width:108.3px;height:14.6px;line-height:14.6px;font-size:10.6px"><span style="transform:scaleX(0.9383)">City of Mandaluyong</span></div>
<div class="t " style="left:1202.6px;top:675.9px;font-size:12.25px;color:#6b7280;">6</div>
<div class="t " style="left:1282.2px;top:676px;font-size:12.25px;letter-spacing:-0.128px;color:#6b7280;">₱1,500.00</div>
<div class="rl" style="top:765.7px"></div>
<div class="cb" style="top:731.8px"><svg width="14" height="14" viewBox="0 0 14 14" fill="none" stroke="#fff" stroke-width="1.900"><path d="M3.200 7.100 L5.900 9.600 L10.500 4.500"/></svg></div>
<div class="t " style="left:285px;top:729.6px;font-size:12.25px;color:#6b7280;">10</div>
<div class="img" style="top:724.45px"><svg width="30" height="30" viewBox="0 0 30 30"><rect x="0.500" y="0.500" width="29" height="29" rx="2.500" fill="#fff" stroke="#edf0f3"/><g transform="rotate(33 17.200 10.300)"><rect x="8.200" y="7" width="18" height="6.600" rx="3.300" fill="#dedee0" stroke="#9a9a9a" stroke-width="0.500"/><path d="M9.500 10.300 Q13 5.500 19.500 8.200 M9.500 10.300 Q14 13.800 19.500 12.400" fill="none" stroke="#3a3a3a" stroke-width="1"/></g><g transform="rotate(36 14.300 19.200)"><rect x="4.300" y="15.400" width="20" height="7.600" rx="3.800" fill="#dedee0" stroke="#9a9a9a" stroke-width="0.500"/><path d="M6 19.200 Q10 13.800 17.500 16.700 M6 19.200 Q11 23.200 17.500 21.700" fill="none" stroke="#3a3a3a" stroke-width="1.100"/></g></svg></div>
<div class="t " style="left:434.9px;top:729.6px;font-size:12.25px;transform:scaleX(0.9127);transform-origin:0 50%;color:#000;font-weight:bold;text-decoration:underline;text-decoration-thickness:1px;text-underline-offset:1.500px;">Slipper</div>
<div class="tag " style="left:761.7px;top:733.1px;width:50.4px;height:14.6px;line-height:14.6px;font-size:10.6px"><span style="transform:scaleX(0.9299)">Physical</span></div>
<div class="tag " style="left:867.5px;top:733.1px;width:42px;height:14.6px;line-height:14.6px;font-size:10.6px"><span style="transform:scaleX(0.9191)">Others</span></div>
<div class="tag " style="left:1071px;top:730px;width:108.3px;height:14.6px;line-height:14.6px;font-size:10.6px"><span style="transform:scaleX(0.9383)">City of Mandaluyong</span></div>
<div class="t " style="left:1202.6px;top:729.3px;font-size:12.25px;color:#6b7280;">6</div>
<div class="t " style="left:1282.2px;top:729.4px;font-size:12.25px;letter-spacing:-0.128px;color:#6b7280;">₱1,200.00</div>
<div class="abs" style="left:220px;top:766px;width:1148px;height:6px;border-radius:3px;background:#f4f4f4;border:1px solid #ececec"></div><div class="abs" style="left:220px;top:766px;width:918px;height:6px;border-radius:3px;background:#c6c6c6"></div>
<svg class="ic" style="left:0;top:0;overflow:visible" width="1" height="1"><path d="M209.6 163.8 L223.5 182.7" stroke="#111" stroke-width="1.6" fill="none"/><path d="M227.9 188.7 L220.1 184.3 L223.5 182.7 L226.0 179.9 Z" fill="#111"/></svg>
<svg class="ic" style="left:0;top:0;overflow:visible" width="1" height="1"><path d="M982.0 206.6 L1029.6 162.0" stroke="#111" stroke-width="1.5" fill="none"/><path d="M1035.6 156.4 L1031.5 165.2 L1029.6 162.0 L1026.6 159.9 Z" fill="#111"/></svg>
<div class="abs" style="left:1377px;top:348.700px;width:23px;height:96px;background:#2fb457;border-radius:4px 0 0 4px"></div>
<div class="abs" style="left:1359.500px;top:384.300px;width:58px;height:20px;line-height:20px;transform:rotate(-90deg);transform-origin:center;font-size:11.300px;font-weight:bold;color:#fff;white-space:nowrap;text-align:center;letter-spacing:-0.150px">Need help?</div>
<div class="abs" style="left:1370.700px;top:427.900px;width:23.200px;height:23.200px;border-radius:50%;background:#f4f4f4;box-shadow:0 1px 3px rgba(0,0,0,0.300)"></div>
<svg class="ic" style="left:1377.500px;top:435px" width="10" height="10" viewBox="0 0 10 10" fill="#000"><path d="M0.500 1.300 Q0.500 0.500 1.300 0.500 H8.700 Q9.500 0.500 9.500 1.300 V6.200 Q9.500 7 8.700 7 H2.800 L0.500 9.300Z"/></svg>
</div>
</body>
</html>
